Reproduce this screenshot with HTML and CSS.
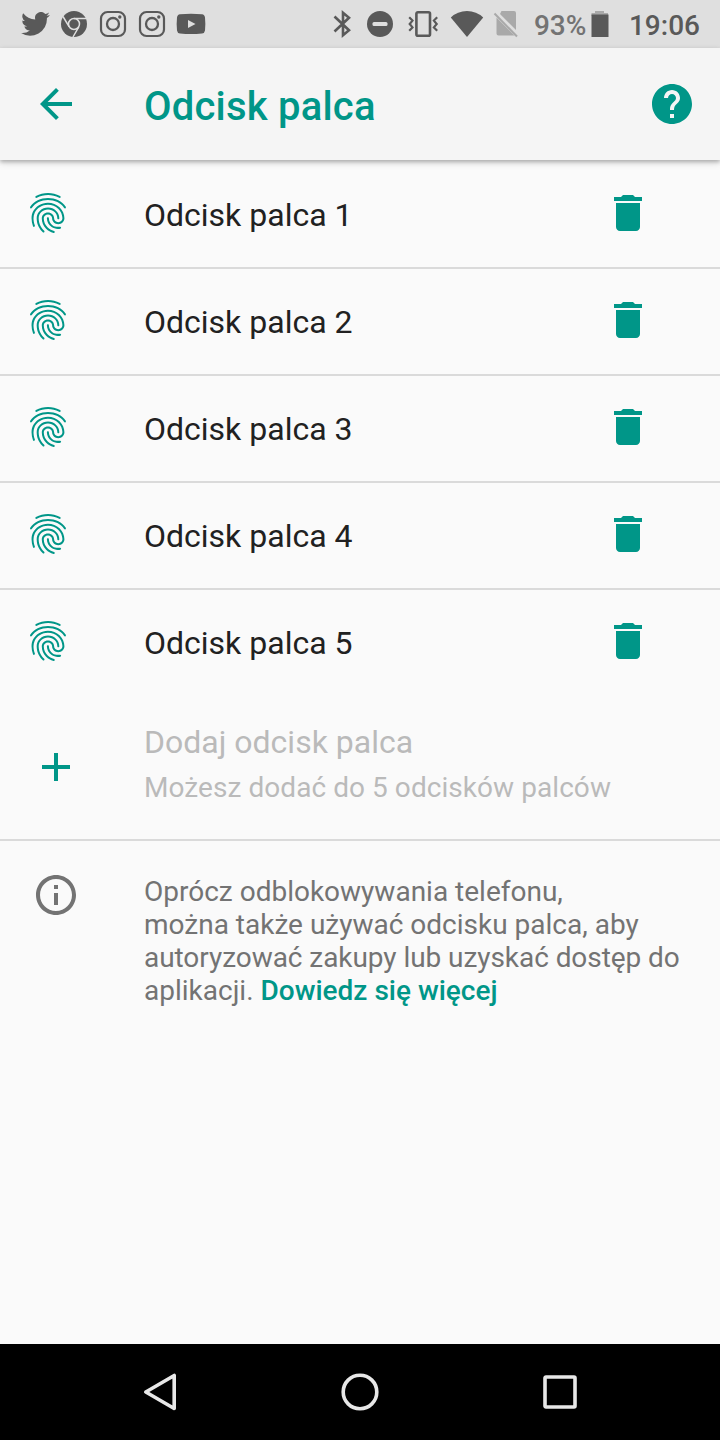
FILE: index.html
```html
<!DOCTYPE html>
<html lang="pl">
<head>
  <meta charset="UTF-8" />
  <meta name="viewport" content="width=device-width, initial-scale=1.0" />
  <title>Odcisk palca</title>
  <link rel="stylesheet" href="styles.css">
</head>

<body>
  <svg class="sprite" width="0" height="0">
    <symbol id="fingerprint" viewBox="0 0 24 24">
      <path d="M17.81 4.47c-.08 0-.16-.02-.23-.06C15.66 3.42 14 3 12.01 3c-1.98 0-3.86.47-5.57 1.41-.24.13-.54.04-.68-.2-.13-.24-.04-.55.2-.68C7.82 2.52 9.86 2 12.01 2c2.13 0 3.99.47 6.03 1.52.25.13.34.43.21.67-.09.18-.26.28-.44.28zM3.5 9.72c-.1 0-.2-.03-.29-.09-.23-.16-.28-.47-.12-.7.99-1.4 2.25-2.5 3.75-3.27C9.98 4.04 14 4.03 17.15 5.65c1.5.77 2.76 1.86 3.75 3.25.16.22.11.54-.12.7-.23.16-.54.11-.7-.12-.9-1.26-2.04-2.25-3.39-2.94-2.87-1.47-6.54-1.47-9.4.01-1.36.7-2.5 1.7-3.4 2.96-.08.14-.23.21-.39.21zm6.25 12.07c-.13 0-.26-.05-.35-.15-.87-.87-1.34-1.43-2.01-2.64-.69-1.23-1.05-2.73-1.05-4.34 0-2.97 2.54-5.39 5.66-5.39s5.66 2.42 5.66 5.39c0 .28-.22.5-.5.5s-.5-.22-.5-.5c0-2.42-2.09-4.39-4.66-4.39-2.57 0-4.66 1.97-4.66 4.39 0 1.44.32 2.77.93 3.85.64 1.15 1.08 1.64 1.85 2.42.19.2.19.51 0 .71-.11.1-.24.15-.37.15zm7.17-1.85c-1.19 0-2.24-.3-3.1-.89-1.49-1.01-2.38-2.65-2.38-4.39 0-.28.22-.5.5-.5s.5.22.5.5c0 1.41.72 2.74 1.94 3.56.71.48 1.54.71 2.54.71.24 0 .64-.03 1.04-.1.27-.05.53.13.58.41.05.27-.13.53-.41.58-.57.11-1.07.12-1.21.12zM14.91 22c-.04 0-.09-.01-.13-.02-1.59-.44-2.63-1.03-3.72-2.1-1.4-1.39-2.17-3.24-2.17-5.22 0-1.62 1.38-2.94 3.08-2.94 1.7 0 3.08 1.32 3.08 2.94 0 1.07.93 1.94 2.08 1.94s2.08-.87 2.08-1.94c0-3.77-3.25-6.83-7.25-6.83-2.84 0-5.44 1.58-6.61 4.03-.39.81-.59 1.76-.59 2.8 0 .78.07 2.01.67 3.61.1.26-.03.55-.29.64-.26.1-.55-.04-.64-.29-.49-1.31-.73-2.61-.73-3.96 0-1.2.23-2.29.68-3.24 1.33-2.79 4.28-4.6 7.51-4.6 4.55 0 8.25 3.51 8.25 7.83 0 1.62-1.38 2.94-3.08 2.94s-3.08-1.32-3.08-2.94c0-1.07-.93-1.94-2.08-1.94s-2.08.87-2.08 1.94c0 1.71.66 3.31 1.87 4.51.95.94 1.86 1.46 3.27 1.85.27.07.42.35.35.61-.05.23-.26.38-.47.38z"/>
    </symbol>
    <symbol id="trash" viewBox="0 0 24 24">
      <path d="M6 19c0 1.1.9 2 2 2h8c1.1 0 2-.9 2-2V7H6v12zM19 4h-3.5l-1-1h-5l-1 1H5v2h14V4z"/>
    </symbol>
    <symbol id="instagram" viewBox="0 0 28 28">
      <rect x="2" y="2" width="24" height="24" rx="6.5" fill="none" stroke="currentColor" stroke-width="2.2"/>
      <circle cx="14" cy="14" r="6" fill="none" stroke="currentColor" stroke-width="2.3"/>
      <circle cx="20.8" cy="7" r="1.7"/>
    </symbol>
  </svg>

  <div class="status-bar">
    <div class="notifications">
      <svg class="twitter" viewBox="0 0 24 20"><path d="M24 2.4a10 10 0 0 1-2.8.8A4.9 4.9 0 0 0 23.3.5a10 10 0 0 1-3.1 1.2A4.9 4.9 0 0 0 11.8 6.2 14 14 0 0 1 1.7 1a4.9 4.9 0 0 0 1.5 6.6A4.9 4.9 0 0 1 1 7v.1a4.9 4.9 0 0 0 3.9 4.8 5 5 0 0 1-2.2.1 4.9 4.9 0 0 0 4.6 3.4A9.9 9.9 0 0 1 0 17.5 14 14 0 0 0 21.5 5.1 10 10 0 0 0 24 2.4z"/></svg>
      <svg class="chrome" viewBox="0 0 28 28">
        <circle cx="14" cy="14" r="13"/>
        <g fill="none" stroke="#dfdfdf" stroke-width="1.5">
          <circle cx="14" cy="14" r="5.5"/>
          <path d="M14 8.5h12M9.2 16.8L3 6.500M18.8 16.8L13 27"/>
        </g>
      </svg>
      <svg class="insta"><use href="#instagram"/></svg>
      <svg class="insta"><use href="#instagram"/></svg>
      <svg class="youtube" viewBox="0 0 30 22"><path fill-rule="evenodd" d="M4 1.3Q15 .3 26 1.3 28.6 1.5 29 4.5 29.7 11 29 17.5 28.6 20.3 26 20.6 15 21.6 4 20.6 1.4 20.3 1 17.500.3 11 1 4.5 1.4 1.5 4 1.3zM12 7v8l7.500-4z"/></svg>
    </div>

    <div class="system">
      <svg class="bluetooth" viewBox="0 0 20 28"><path fill="none" stroke="currentColor" stroke-width="2.6" d="M2.500 6.500L17 20.200 11 25.200V2.800L17 7.800 2.500 21.500"/></svg>
      <svg class="dnd" viewBox="0 0 28 28"><circle cx="14" cy="14" r="13"/><rect class="hole" x="6.5" y="12" width="15" height="4" rx="1.5"/></svg>
      <svg class="vibrate" viewBox="0 0 32 28">
        <g fill="none" stroke="currentColor">
          <rect x="9.4" y="2.3" width="13.6" height="23.4" rx="1.5" stroke-width="2.6"/>
          <path stroke-width="2.2" d="M2.200 7.200l3.300 3.400-2.800 3.400 2.800 3.400-3.300 3.400M30.200 7.200l-3.300 3.400 2.800 3.400-2.800 3.400 3.300 3.400"/>
        </g>
      </svg>
      <svg class="wifi" viewBox="0 0 34 28"><path d="M17 27L.8 7.500Q7.500 1 17 1t16.200 6.500z"/></svg>
      <svg class="no-sim" viewBox="0 0 26 30">
        <path d="M9.500 2H22q2 0 2 2v17L8 5zM4.500 8.500L22.500 26.500H6.500q-2 0-2-2z"/>
        <path fill="none" stroke="currentColor" stroke-width="2" d="M2.500 4.500L25 27.500"/>
      </svg>
      <span class="percent">93%</span>
      <svg class="battery" viewBox="0 0 18 28"><path class="battery-top" d="M4 1h9v2h4v3H.5V3H4z"/><path d="M.5 4.500H17.500V27H.5z"/></svg>
      <span class="clock">19:06</span>
    </div>
  </div>

  <header class="app-bar">
    <svg class="icon" viewBox="0 0 24 24"><path d="M20 11H7.83l5.59-5.59L12 4l-8 8 8 8 1.41-1.41L7.83 13H20v-2z"/></svg>
    <h1>Odcisk palca</h1>
    <svg class="icon" viewBox="0 0 24 24"><path d="M12 2C6.48 2 2 6.48 2 12s4.48 10 10 10 10-4.48 10-10S17.52 2 12 2zm1 17h-2v-2h2v2zm2.07-7.75l-.9.92C13.45 12.9 13 13.5 13 15h-2v-.5c0-1.1.45-2.1 1.17-2.83l1.24-1.26c.37-.36.59-.86.59-1.41 0-1.1-.9-2-2-2s-2 .9-2 2H8c0-2.21 1.79-4 4-4s4 1.79 4 4c0 .88-.36 1.68-.93 2.25z"/></svg>
  </header>

  <main>
    <ul class="prints">
      <li>
        <svg class="icon"><use href="#fingerprint"/></svg>
        <span class="name">Odcisk palca 1</span>
        <svg class="icon"><use href="#trash"/></svg>
      </li>
      <li>
        <svg class="icon"><use href="#fingerprint"/></svg>
        <span class="name">Odcisk palca 2</span>
        <svg class="icon"><use href="#trash"/></svg>
      </li>
      <li>
        <svg class="icon"><use href="#fingerprint"/></svg>
        <span class="name">Odcisk palca 3</span>
        <svg class="icon"><use href="#trash"/></svg>
      </li>
      <li>
        <svg class="icon"><use href="#fingerprint"/></svg>
        <span class="name">Odcisk palca 4</span>
        <svg class="icon"><use href="#trash"/></svg>
      </li>
      <li>
        <svg class="icon"><use href="#fingerprint"/></svg>
        <span class="name">Odcisk palca 5</span>
        <svg class="icon"><use href="#trash"/></svg>
      </li>
    </ul>

    <div class="add">
      <svg class="icon" viewBox="0 0 24 24"><path d="M19 13h-6v6h-2v-6H5v-2h6V5h2v6h6v2z"/></svg>
      <div class="add-text">
        <p class="add-title">Dodaj odcisk palca</p>
        <p class="add-summary">Możesz dodać do 5 odcisków palców</p>
      </div>
    </div>

    <div class="info">
      <svg class="icon" viewBox="0 0 24 24"><path d="M11 17h2v-6h-2v6zm1-15C6.48 2 2 6.48 2 12s4.48 10 10 10 10-4.48 10-10S17.52 2 12 2zm0 18c-4.41 0-8-3.59-8-8s3.59-8 8-8 8 3.59 8 8-3.59 8-8 8zM11 9h2V7h-2v2z"/></svg>
      <p>Oprócz odblokowywania telefonu,<br>można także używać odcisku palca, aby <span class="tight">autoryzować zakupy lub uzyskać dostęp do</span> aplikacji. <a href="#">Dowiedz się więcej</a></p>
    </div>
  </main>

  <nav class="nav-bar">
    <svg viewBox="0 0 40 40"><path d="M5.800 20L34.200 3.500v33z"/></svg>
    <svg viewBox="0 0 40 40"><circle cx="20" cy="20" r="16.8"/></svg>
    <svg viewBox="0 0 40 40"><rect x="5" y="5" width="30" height="30" rx="1"/></svg>
  </nav>
</body>
</html>
```

FILE: styles.css
```css
:root {
  --teal: #009688;
  --background: #fafafa;
  --bar: #f5f5f5;
  --status: #dfdfdf;
  --status-icon: #595959;
  --divider: #dadada;
  --text: #212121;
  --text-secondary: #737373;
  --disabled: #bababa;
}

* {
  box-sizing: border-box;
}

body {
  margin: 0;
  height: 1440px;
  display: flex;
  flex-direction: column;
  background-color: var(--background);
  color: var(--text);
  font-family: Roboto, sans-serif;
}

h1, p, ul {
  margin: 0;
  padding: 0;
}

svg {
  display: block;
  flex: none;
  fill: currentColor;
}

.sprite {
  position: absolute;
}

.icon {
  width: 48px;
  height: 48px;
  color: var(--teal);
}

/* status bar */
.status-bar {
  height: 48px;
  display: flex;
  justify-content: space-between;
  background-color: var(--status);
  color: var(--status-icon);
}

.notifications, .system {
  display: flex;
  align-items: center;
}

.notifications {
  padding: 0 0 1px 21px;
}

.twitter {
  width: 29px;
  height: 24px;
  margin-right: 10px;
}

.chrome {
  width: 28px;
  height: 28px;
  margin-right: 11px;
}

.insta {
  width: 28px;
  height: 28px;
  margin-right: 11px;
}

.youtube {
  width: 30px;
  height: 22px;
  margin-left: -1px;
}

.system {
  padding-right: 20px;
}

.bluetooth {
  width: 20px;
  height: 28px;
  margin-right: 14px;
}

.dnd {
  width: 28px;
  height: 28px;
  margin-right: 13px;
}

.hole {
  fill: var(--status);
}

.vibrate {
  width: 32px;
  height: 28px;
  margin-right: 11px;
}

.wifi {
  width: 34px;
  height: 28px;
  margin-right: 8px;
}

.no-sim {
  width: 26px;
  height: 30px;
  margin-right: 16px;
  color: #a9a9a9;
}

.percent, .clock {
  font-size: 28px;
  font-weight: 500;
  line-height: 46px;
  padding-top: 4px;
}

.percent {
  width: 57px;
  color: #737373;
}

.battery {
  width: 18px;
  height: 28px;
  margin-right: 20px;
}

.battery-top {
  fill: #a9a9a9;
}

/* app bar */
.app-bar {
  height: 112px;
  display: flex;
  align-items: center;
  padding: 0 24px 0 32px;
  background-color: var(--bar);
  box-shadow: 0 2px 4px rgba(0,0,0,0.26), 0 3px 8px rgba(0,0,0,0.1);
  z-index: 1;
}

.app-bar h1 {
  flex: 1;
  padding: 6px 0 0 64px;
  font-size: 40px;
  font-weight: 500;
  line-height: 48px;
  letter-spacing: 0.2px;
  color: var(--teal);
}

main {
  flex: 1;
}

/* enrolled fingerprints */
.prints {
  padding-top: 2px;
  list-style: none;
}

.prints li {
  height: 107px;
  display: flex;
  align-items: center;
  padding: 0 68px 3px 24px;
  border-bottom: 2px solid var(--divider);
}

.prints li:last-child {
  border-bottom-color: transparent;
}

.name {
  flex: 1;
  padding: 4px 0 0 72px;
  font-size: 32px;
}

.add {
  height: 144px;
  display: flex;
  align-items: center;
  padding: 0 32px 2px;
  border-bottom: 2px solid var(--divider);
}

.add-text {
  padding: 0 0 5px 64px;
  color: var(--disabled);
}

.add-title {
  font-size: 32px;
  line-height: 46px;
}

.add-summary {
  font-size: 28px;
  line-height: 45px;
  letter-spacing: 0.06px;
}

.info {
  display: flex;
  padding: 30px 32px;
}

.info .icon {
  color: var(--text-secondary);
}

.info p {
  padding: 4px 0 0 64px;
  font-size: 28px;
  line-height: 33px;
  color: var(--text-secondary);
}

.tight {
  letter-spacing: -0.06px;
}

.info a {
  color: var(--teal);
  font-weight: 500;
  text-decoration: none;
}

/* system navigation */
.nav-bar {
  height: 96px;
  display: flex;
  align-items: center;
  justify-content: center;
  gap: 160px;
  background-color: #000;
}

.nav-bar svg {
  width: 40px;
  height: 40px;
  fill: none;
  stroke: #e8e8e8;
  stroke-width: 3.6;
  stroke-linejoin: round;
}
```
